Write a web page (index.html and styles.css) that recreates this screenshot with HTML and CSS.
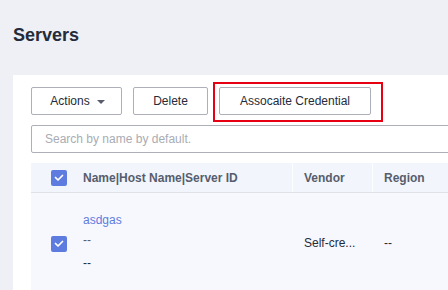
FILE: index.html
```html
<!DOCTYPE html>
<html lang="en">
<head>
    <meta charset="UTF-8">
    <title>Servers</title>
    <link rel="stylesheet" href="styles.css">
</head>
<body>
    <div class="page-header">
        <h1>Servers</h1>
    </div>

    <div class="panel">
        <div class="toolbar">
            <button class="btn btn-actions">
                Actions
                <span class="caret"></span>
            </button>
            <button class="btn btn-delete">Delete</button>
            <button class="btn btn-assoc">Assocaite Credential</button>
        </div>

        <input class="search" type="text" placeholder="Search by name by default.">

        <div class="table">
            <div class="thead">
                <div class="cell cell-check">
                    <span class="checkbox">
                        <svg width="16" height="16" viewBox="0 0 16 16"><polyline points="4.5,7.5 7,10 11.5,5.5" fill="none" stroke="#fff" stroke-width="1.7" stroke-linecap="round" stroke-linejoin="round"/></svg>
                    </span>
                </div>
                <div class="cell cell-name">Name|Host Name|Server ID</div>
                <div class="cell cell-sep">Vendor</div>
                <div class="cell cell-sep">Region</div>
            </div>
            <div class="trow">
                <div class="cell cell-check">
                    <span class="checkbox">
                        <svg width="16" height="16" viewBox="0 0 16 16"><polyline points="4.5,7.5 7,10 11.5,5.5" fill="none" stroke="#fff" stroke-width="1.7" stroke-linecap="round" stroke-linejoin="round"/></svg>
                    </span>
                </div>
                <div class="cell cell-name">
                    <div class="name-block">
                        <a class="link">asdgas</a>
                        <div class="muted">--</div>
                        <div class="dark">--</div>
                    </div>
                </div>
                <div class="cell cell-sep">Self-cre...</div>
                <div class="cell cell-sep">--</div>
            </div>
        </div>
    </div>
</body>
</html>
```

FILE: styles.css
```css
:root {
    --page-bg: #eef0f5;
    --text: #252b3a;
    --text-light: #575d6c;
    --placeholder: #a9acb4;
    --border: #adb0b8;
    --line: #dfe1e6;
    --brand: #5e7ce0;
    --head-bg: #f2f5fc;
    --row-bg: #f7f8fd;
}

* {
    margin: 0;
    padding: 0;
    box-sizing: border-box;
}

body {
    font-family: "Liberation Sans", Arial, sans-serif;
    font-size: 12px;
    color: var(--text);
    background: var(--page-bg);
    overflow: hidden;
}

.page-header {
    height: 75px;
    padding: 25px 13px 0;
}

h1 {
    font-size: 18px;
    line-height: 21px;
    font-weight: 700;
    color: var(--text);
}

.panel {
    margin-left: 13px;
    width: 700px;
    min-height: 220px;
    background: #fff;
    padding: 12px 0 0 18px;
}

.toolbar {
    display: flex;
    gap: 11px;
}

.btn {
    height: 28px;
    border: 1px solid var(--border);
    border-radius: 2px;
    background: #fff;
    color: var(--text);
    font-family: inherit;
    font-size: 12px;
    display: flex;
    align-items: center;
    justify-content: center;
}

.btn-actions {
    width: 91px;
    gap: 7px;
    padding-left: 2px;
}

.caret {
    width: 0;
    height: 0;
    border-left: 4px solid transparent;
    border-right: 4px solid transparent;
    border-top: 4px solid var(--text-light);
    margin-top: 1px;
}

.btn-delete {
    width: 75px;
}

.btn-assoc {
    width: 152px;
    position: relative;
}

/* annotation frame drawn over the button */
.btn-assoc::after {
    content: "";
    position: absolute;
    top: -6px;
    left: -7px;
    right: -13px;
    bottom: -8px;
    border: 2px solid #e60012;
}

.search {
    display: block;
    margin-top: 10px;
    width: 600px;
    height: 28px;
    border: 1px solid var(--border);
    border-radius: 2px;
    padding-left: 13px;
    font-family: inherit;
    font-size: 12px;
    color: var(--text);
    outline: none;
}

.search::placeholder {
    color: var(--placeholder);
}

.table {
    margin-top: 10px;
    width: 600px;
}

.thead,
.trow {
    display: grid;
    grid-template-columns: 52px 209px 80px 1fr;
}

.thead {
    height: 30px;
    background: var(--head-bg);
    border-bottom: 1px solid var(--line);
    font-weight: 700;
    color: var(--text-light);
}

.trow {
    height: 100px;
    background: var(--row-bg);
}

.cell {
    display: flex;
    align-items: center;
}

.cell-check {
    padding-left: 20px;
}

.thead .cell-check {
    padding-top: 1px;
}

.trow .cell-check {
    padding-top: 1px;
}

.cell-sep {
    padding-left: 11px;
}

.thead .cell-sep {
    border-left: 1px solid #fcfdff;
}

.trow .cell-sep {
    padding-left: 12px;
}

.checkbox {
    width: 16px;
    height: 16px;
    border-radius: 2px;
    background: var(--brand);
    display: block;
}

.checkbox svg {
    display: block;
}

.name-block {
    line-height: 20px;
    padding-bottom: 4px;
}

.link {
    display: block;
    color: var(--brand);
}

.muted {
    color: var(--text-light);
}

.dark {
    margin-top: 3px;
    color: var(--text);
}
```
